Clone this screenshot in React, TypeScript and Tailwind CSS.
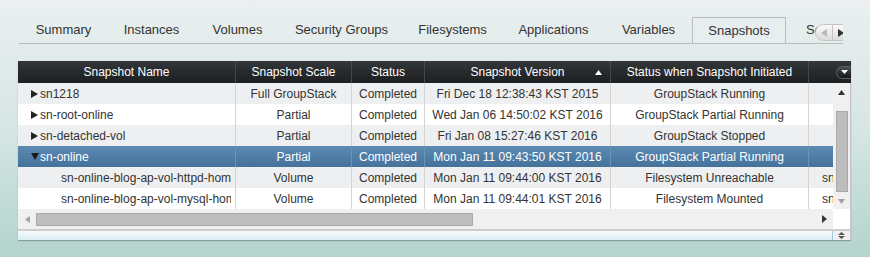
import React from "react";

const tabs: [string, string][] = [
  ["Summary", "w-[89px] justify-center"],
  ["Instances", "w-[87px] justify-center"],
  ["Volumes", "w-[85px] justify-center"],
  ["Security Groups", "w-[123px] justify-center"],
  ["Filesystems", "w-[99px] justify-center"],
  ["Applications", "w-[103px] justify-center"],
  ["Variables", "w-[87px] justify-center"],
  ["Snapshots", "w-[94px] justify-center"],
  ["Settings", "w-[80px] pl-[20px]"],
];

type Row = {
  name: string;
  scale: string;
  status: string;
  version: string;
  initiated: string;
  extra?: string;
  arrow?: "right" | "down";
  child?: boolean;
  selected?: boolean;
};

const rows: Row[] = [
  { name: "sn1218", scale: "Full GroupStack", status: "Completed", version: "Fri Dec 18 12:38:43 KST 2015", initiated: "GroupStack Running", arrow: "right" },
  { name: "sn-root-online", scale: "Partial", status: "Completed", version: "Wed Jan 06 14:50:02 KST 2016", initiated: "GroupStack Partial Running", arrow: "right" },
  { name: "sn-detached-vol", scale: "Partial", status: "Completed", version: "Fri Jan 08 15:27:46 KST 2016", initiated: "GroupStack Stopped", arrow: "right" },
  { name: "sn-online", scale: "Partial", status: "Completed", version: "Mon Jan 11 09:43:50 KST 2016", initiated: "GroupStack Partial Running", arrow: "down", selected: true },
  { name: "sn-online-blog-ap-vol-httpd-home", scale: "Volume", status: "Completed", version: "Mon Jan 11 09:44:00 KST 2016", initiated: "Filesystem Unreachable", extra: "sn-online-blog-ap-vol-httpd-home", child: true },
  { name: "sn-online-blog-ap-vol-mysql-home", scale: "Volume", status: "Completed", version: "Mon Jan 11 09:44:01 KST 2016", initiated: "Filesystem Mounted", extra: "sn-online-blog-ap-vol-mysql-home", child: true },
];

export default function App() {
  return (
    <div
      className="w-[870px] h-[257px] overflow-hidden bg-gradient-to-b from-[#ebeff0] via-[#d6e6e4] to-[#b3d4cc] text-[#333]"
      style={{ fontFamily: '"Liberation Sans", Arial, sans-serif' }}
    >
      {/* tabs */}
      <div className="pt-[17px] pl-[19px] flex">
        <div className="w-[824px] flex border-b border-[#bcbcbc] overflow-hidden relative h-[27px]">
          {tabs.map(([t, w]) => (
            <div
              key={t}
              className={
                t === "Snapshots"
                  ? w + " h-[27px] shrink-0 flex items-center text-[13px] border border-b-0 border-[#bcbcbc] bg-[#e6eef0] -mb-px pb-[1px]"
                  : w + " h-[26px] shrink-0 flex items-center text-[13px] whitespace-nowrap"
              }
            >
              {t}
            </div>
          ))}
          <div className="absolute right-[-7px] top-[7px] w-[35px] h-[17px] rounded-full border border-[#c4c4c4] bg-gradient-to-b from-[#fafafa] to-[#dcdcdc] flex">
            <div className="flex-1 flex items-center justify-center border-r border-[#c4c4c4]">
              <svg width="6" height="8" viewBox="0 0 6 8"><path d="M6 0 L0 4 L6 8 Z" fill="#b8b8b8" /></svg>
            </div>
            <div className="flex-1 flex items-center justify-center">
              <svg width="6" height="8" viewBox="0 0 6 8"><path d="M0 0 L6 4 L0 8 Z" fill="#333" /></svg>
            </div>
          </div>
        </div>
      </div>

      {/* grid panel */}
      <div className="mt-[17px] ml-[18px] w-[833px] flex flex-col shadow-[0_1px_1px_rgba(0,0,0,0.25)]">
        {/* header */}
        <div className="h-[22px] flex bg-gradient-to-b from-[#33373a] to-[#1d1f21] text-white text-[12px]">
          <div className="w-[218px] flex items-center justify-center border-r border-[#45494c]">Snapshot Name</div>
          <div className="w-[116px] flex items-center justify-center border-r border-[#45494c]">Snapshot Scale</div>
          <div className="w-[73px] flex items-center justify-center border-r border-[#45494c]">Status</div>
          <div className="w-[186px] flex items-center justify-center border-r border-[#45494c] relative">
            Snapshot Version
            <svg className="absolute right-[8px] top-[9px]" width="7" height="5" viewBox="0 0 7 5"><path d="M0 5 L3.5 0 L7 5 Z" fill="#fff" /></svg>
          </div>
          <div className="w-[198px] flex items-center justify-center border-r border-[#45494c]">Status when Snapshot Initiated</div>
          <div className="flex-1 flex items-center justify-end">
            <div className="w-[15px] h-[13px] rounded-l-full bg-gradient-to-b from-[#4a4e51] to-[#16181a] border border-[#5b5f62] border-r-0 flex items-center justify-center">
              <svg width="7" height="4" viewBox="0 0 7 4"><path d="M0 0 L7 0 L3.5 4 Z" fill="#fff" /></svg>
            </div>
          </div>
        </div>

        {/* body + vertical scrollbar */}
        <div className="flex border-r border-[#c4c4c4]">
          <div className="w-[815px] overflow-hidden">
            {rows.map((r, i) => (
              <div
                key={r.name}
                className={
                  r.selected
                    ? "h-[21px] flex text-[12px] text-white bg-gradient-to-b from-[#5d8ab2] to-[#44729b]"
                    : i % 2 === 0
                    ? "h-[21px] flex text-[12px] bg-[#eeeff0]"
                    : "h-[21px] flex text-[12px] bg-white"
                }
              >
                <div
                  className={
                    "w-[218px] shrink-0 flex items-center overflow-hidden whitespace-nowrap border-r " +
                    (r.selected ? "border-[#6b93b6]" : "border-[#d4d4d4]") +
                    (r.child ? " pl-[43px] pr-[4px]" : " pl-[13px]")
                  }
                >
                  {r.arrow === "right" && (
                    <svg className="mr-[2px] shrink-0" width="7" height="8" viewBox="0 0 7 8"><path d="M0 0 L7 4 L0 8 Z" fill="#222" /></svg>
                  )}
                  {r.arrow === "down" && (
                    <svg className="mr-[1px] shrink-0" width="8" height="7" viewBox="0 0 8 7"><path d="M0 0 L8 0 L4 7 Z" fill="#1a1a1a" /></svg>
                  )}
                  <span className="overflow-hidden">{r.name}</span>
                </div>
                <div className={"w-[116px] shrink-0 flex items-center justify-center border-r " + (r.selected ? "border-[#6b93b6]" : "border-[#d4d4d4]")}>{r.scale}</div>
                <div className={"w-[73px] shrink-0 flex items-center justify-center border-r " + (r.selected ? "border-[#6b93b6]" : "border-[#d4d4d4]")}>{r.status}</div>
                <div className={"w-[186px] shrink-0 flex items-center justify-center border-r " + (r.selected ? "border-[#6b93b6]" : "border-[#d4d4d4]")}>{r.version}</div>
                <div className={"w-[198px] shrink-0 flex items-center justify-center border-r " + (r.selected ? "border-[#6b93b6]" : "border-[#d4d4d4]")}>{r.initiated}</div>
                <div className="w-[24px] shrink-0 flex items-center pl-[13px] overflow-hidden whitespace-nowrap">{r.extra}</div>
              </div>
            ))}
          </div>
          {/* vertical scrollbar */}
          <div className="w-[17px] h-[126px] bg-[#f0f0f0] flex flex-col items-center">
            <svg className="mt-[7px]" width="7" height="5" viewBox="0 0 7 5"><path d="M0 5 L3.5 0 L7 5 Z" fill="#333" /></svg>
            <div className="mt-[16px] w-[12px] h-[81px] bg-[#bdbdbd] border border-[#a9a9a9]"></div>
            <svg className="mt-[7px]" width="7" height="5" viewBox="0 0 7 5"><path d="M0 0 L7 0 L3.5 5 Z" fill="#a3a3a3" /></svg>
          </div>
        </div>

        {/* horizontal scrollbar */}
        <div className="h-[20px] flex border-r border-[#c4c4c4]">
          <div className="w-[815px] bg-[#f0f0f0] flex items-center">
            <svg className="ml-[7px]" width="5" height="7" viewBox="0 0 5 7"><path d="M5 0 L0 3.5 L5 7 Z" fill="#a3a3a3" /></svg>
            <div className="ml-[6px] w-[437px] h-[13px] bg-[#bdbdbd] border border-[#a9a9a9]"></div>
            <div className="flex-1"></div>
            <svg className="mr-[6px]" width="5" height="8" viewBox="0 0 5 8"><path d="M0 0 L5 4 L0 8 Z" fill="#333" /></svg>
          </div>
          <div className="w-[17px] bg-white"></div>
        </div>

        {/* bottom bar */}
        <div className="h-[11px] flex border-t-2 border-[#cdcdcd] border-r border-r-[#c4c4c4] bg-gradient-to-b from-[#f4fafd] to-[#dcedf5]">
          <div className="w-[815px] border-r border-[#9fc9e0]"></div>
          <div className="flex-1 flex flex-col items-center justify-center gap-[1px] bg-[#f0f0f0]">
            <svg width="7" height="3" viewBox="0 0 7 3"><path d="M0 3 L3.5 0 L7 3 Z" fill="#555" /></svg>
            <svg width="7" height="3" viewBox="0 0 7 3"><path d="M0 0 L7 0 L3.5 3 Z" fill="#555" /></svg>
          </div>
        </div>
      </div>
    </div>
  );
}
